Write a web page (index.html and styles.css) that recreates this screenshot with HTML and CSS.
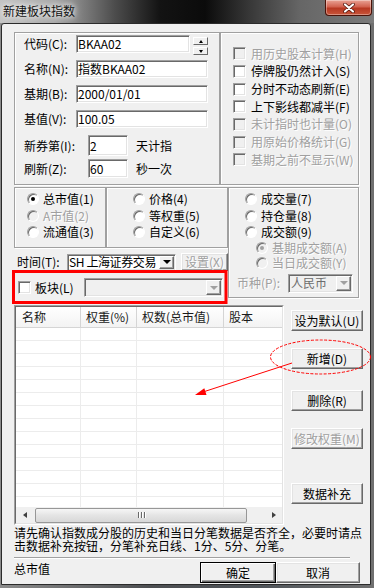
FILE: index.html
```html
<!DOCTYPE html>
<html lang="zh-CN">
<head>
    <meta charset="UTF-8">
    <meta name="viewport" content="width=device-width, initial-scale=1.0">
    <title>新建板块指数</title>
    <link rel="stylesheet" href="styles.css">
</head>
<body>
<div class="window">
    <div class="titlebar">
        <span class="title">新建板块指数</span>
        <span class="close">
            <svg width="14" height="10" viewBox="0 0 14 10">
                <path d="M3 1.5 L11 8.5 M11 1.5 L3 8.5" stroke="#4a1006" stroke-width="3.6" stroke-linecap="round"/>
                <path d="M3 1.5 L11 8.5 M11 1.5 L3 8.5" stroke="#fff" stroke-width="2.2" stroke-linecap="round"/>
            </svg>
        </span>
    </div>

    <div class="client">
        <div class="row-top">
            <div class="group grp-basic">
                <div class="field">
                    <span class="lbl">代码(C):</span>
                    <span class="edit w-code">BKAA02</span>
                    <span class="spin">
                        <span class="spin-btn"><i class="tri-up"></i></span>
                        <span class="spin-btn"><i class="tri-down"></i></span>
                    </span>
                </div>
                <div class="field"><span class="lbl">名称(N):</span><span class="edit w-long">指数BKAA02</span></div>
                <div class="field"><span class="lbl">基期(B):</span><span class="edit w-long">2000/01/01</span></div>
                <div class="field"><span class="lbl">基值(V):</span><span class="edit w-long">100.05</span></div>
                <div class="field tall"><span class="lbl lbl-wide">新券第(I):</span><span class="edit w-short">2</span><span class="unit">天计指</span></div>
                <div class="field f6"><span class="lbl lbl-wide">刷新(Z):</span><span class="edit w-short">60</span><span class="unit">秒一次</span></div>
            </div>
            <div class="group grp-opts">
                <div class="opt dim"><span class="check off"></span>用历史股本计算(H)</div>
                <div class="opt"><span class="check"></span>停牌股仍然计入(S)</div>
                <div class="opt"><span class="check"></span>分时不动态刷新(E)</div>
                <div class="opt"><span class="check"></span>上下影线都减半(F)</div>
                <div class="opt dim"><span class="check off"></span>未计指时也计量(O)</div>
                <div class="opt dim"><span class="check off"></span>用原始价格统计(G)</div>
                <div class="opt dim"><span class="check off"></span>基期之前不显示(W)</div>
            </div>
        </div>

        <div class="mid">
            <div class="mid-left">
                <div class="radio-groups">
                    <div class="group grp-r1">
                        <div class="opt-r"><span class="radio on"></span>总市值(1)</div>
                        <div class="opt-r dim"><span class="radio off"></span>A市值(2)</div>
                        <div class="opt-r"><span class="radio"></span>流通值(3)</div>
                    </div>
                    <div class="group grp-r2">
                        <div class="opt-r"><span class="radio"></span>价格(4)</div>
                        <div class="opt-r"><span class="radio"></span>等权重(5)</div>
                        <div class="opt-r"><span class="radio"></span>自定义(6)</div>
                    </div>
                </div>
                <div class="time-row">
                    <span class="lbl">时间(T):</span>
                    <span class="combo w-time">
                        <span class="combo-text tight">SH 上海证券交易</span>
                        <span class="combo-btn"><i class="tri-down big"></i></span>
                    </span>
                    <span class="btn btn-set dim">设置(X)</span>
                </div>
                <div class="block-row">
                    <span class="check"></span>
                    <span class="lbl">板块(L)</span>
                    <span class="combo off w-block">
                        <span class="combo-text"></span>
                        <span class="combo-btn"><i class="tri-down big grey"></i></span>
                    </span>
                </div>
            </div>
            <div class="group grp-r3">
                <div class="opt-r"><span class="radio"></span>成交量(7)</div>
                <div class="opt-r"><span class="radio"></span>持仓量(8)</div>
                <div class="opt-r"><span class="radio"></span>成交额(9)</div>
                <div class="opt-r opt-sub dim"><span class="radio off on"></span>基期成交额(A)</div>
                <div class="opt-r opt-sub dim"><span class="radio off"></span>当日成交额(Y)</div>
                <div class="cur-row">
                    <span class="lbl dim">币种(P):</span>
                    <span class="combo off w-cur">
                        <span class="combo-text grey-text">人民币</span>
                        <span class="combo-btn"><i class="tri-down big grey"></i></span>
                    </span>
                </div>
            </div>
        </div>

        <div class="list-row">
            <div class="list">
                <div class="list-in">
                    <div class="list-head">
                        <span class="c1">名称</span>
                        <span class="c2">权重(%)</span>
                        <span class="c3">权数(总市值)</span>
                        <span class="c4">股本</span>
                    </div>
                    <div class="list-body"></div>
                    <div class="hscroll">
                        <span class="sb-btn"><i class="tri-left"></i></span>
                        <span class="thumb"><i></i><i></i><i></i></span>
                        <span class="sb-btn sb-right"><i class="tri-right"></i></span>
                    </div>
                </div>
            </div>
            <div class="side">
                <span class="btn">设为默认(U)</span>
                <span class="btn b-add">新增(D)</span>
                <span class="btn b-del">删除(R)</span>
                <span class="btn b-mod dim">修改权重(M)</span>
                <span class="btn b-data">数据补充</span>
            </div>
        </div>

        <p class="note">请先确认指数成分股的历史和当日分笔数据是否齐全，必要时请点<br>击数据补充按钮，分笔补充日线、1分、5分、分笔。</p>
        <div class="sep"></div>

        <div class="footer">
            <span class="lbl">总市值</span>
            <span class="btn btn-ok">确定</span>
            <span class="btn btn-cancel">取消</span>
        </div>
    </div>

    <svg class="marks" width="374" height="588" viewBox="0 0 374 588">
        <rect x="13.5" y="271.5" width="212.5" height="31" fill="none" stroke="#ff0000" stroke-width="3"/>
        <ellipse cx="320.5" cy="357" rx="50" ry="17" fill="none" stroke="#ff0000" stroke-width="1" stroke-dasharray="3 1.5"/>
        <line x1="292" y1="363" x2="203" y2="392" stroke="#ff0000" stroke-width="1"/>
        <polygon points="195,395 204.3,388.3 206.5,394.9" fill="#ff0000"/>
    </svg>
</div>
</body>
</html>
```

FILE: styles.css
```css
* { box-sizing: border-box; }
body { margin: 0; font-family: "Noto Sans CJK SC", "Noto Sans", sans-serif; font-size: 12px; line-height: 14px; color: #000; }

.window {
    position: relative; width: 374px; height: 588px; overflow: hidden;
    display: flex; flex-direction: column; padding: 0 3px 3px 1px;
    background: linear-gradient(90deg, #8c8c8c, #4d4f52 40%, #50555a 70%, #707070);
}
.titlebar {
    flex: none; height: 23px; margin: 0 -3px 0 -1px;
    display: flex; justify-content: space-between; align-items: flex-start;
    background: linear-gradient(90deg, #c4c4c4 0, #a8a8a8 55px, #4c4c4c 115px, #131313 160px, #0b0b0b 205px, #383838 250px, #666 300px, #7b7b7b 374px);
}
.title { padding: 4px 0 0 3px; color: #111; text-shadow: 0 0 5px #fff, 0 0 8px #fff; }
.close {
    width: 47px; height: 16px; margin-right: 2px;
    display: flex; align-items: center; justify-content: center;
    border: 1px solid #4a1208; border-top: 0; border-radius: 0 0 4px 4px;
    background: linear-gradient(#e9a395, #d2624f 45%, #b73822 55%, #c8553a);
    box-shadow: inset 0 0 0 1px rgba(255, 255, 255, .35);
}

.client {
    flex: 1; background: #f0f0f0;
    border: 1px solid #2b2b2b; border-radius: 3px 3px 0 0;
    padding: 8px 0 0 12px;
}

/* common win32 bits */
.group { border: 1px solid #a0a0a0; box-shadow: inset 1px 1px 0 #fff, 1px 1px 0 #fff; }
.dim { color: #a0a0a0; text-shadow: 1px 1px 0 #fff; }
.lbl { white-space: nowrap; flex: none; }
.edit {
    height: 100%; display: flex; align-items: center; padding-left: 1px;
    background: #fff; white-space: nowrap; overflow: hidden;
    border: 1px solid; border-color: #a0a0a0 #fff #fff #a0a0a0;
    box-shadow: inset 1px 1px 0 #696969, inset -1px -1px 0 #e3e3e3;
}
.btn {
    display: flex; align-items: center; justify-content: center; white-space: nowrap;
    background: #f0f0f0;
    border: 1px solid; border-color: #fff #696969 #696969 #fff;
    box-shadow: inset -1px -1px 0 #a0a0a0, inset 1px 1px 0 #e3e3e3;
}
.check {
    flex: none; width: 13px; height: 13px; background: #fff;
    border: 1px solid; border-color: #a0a0a0 #fff #fff #a0a0a0;
    box-shadow: inset 1px 1px 0 #696969, inset -1px -1px 0 #e3e3e3;
}
.check.off { background: #f0f0f0; }
.radio {
    position: relative; flex: none; width: 12px; height: 12px; margin-right: 4px;
    border-radius: 50%; background: #fff;
    border: 1px solid; border-color: #a0a0a0 #fff #fff #a0a0a0;
    box-shadow: inset 1px 1px 0 #696969;
}
.radio.on::after {
    content: ""; position: absolute; left: 3px; top: 3px;
    width: 4px; height: 4px; border-radius: 50%; background: #000;
}
.radio.off { background: #f0f0f0; }
.radio.off.on::after { background: #a0a0a0; }

.tri-up, .tri-down, .tri-left, .tri-right { display: block; width: 0; height: 0; border: solid transparent; }
.tri-up { border-width: 0 2.5px 3px; border-bottom-color: #000; }
.tri-down { border-width: 3px 2.5px 0; border-top-color: #000; }
.tri-down.big { border-width: 4px 4px 0; }
.tri-down.grey { border-top-color: #a0a0a0; }
.tri-left { border-width: 3.5px 4px 3.5px 0; border-right-color: #404040; }
.tri-right { border-width: 3.5px 0 3.5px 4px; border-left-color: #404040; }

/* top row */
.row-top { display: flex; height: 153px; }
.grp-basic { width: 206px; padding: 2px 0 0 9px; }
.grp-opts { width: 139px; padding: 12px 0 0 12px; }

.field { display: flex; align-items: center; height: 18px; margin-top: 7px; }
.field:first-child { margin-top: 0; }
.field.tall { height: 21px; }
.field.f6 { height: 19px; margin-top: 3px; }
.field .lbl { width: 52px; }
.field .lbl-wide { width: 64px; }
.w-code { width: 114px; }
.w-long { width: 132px; }
.w-short { width: 40px; }
.unit { margin-left: 8px; }

.spin { align-self: flex-start; margin: 2px 0 0 3px; display: flex; flex-direction: column; gap: 2px; }
.spin-btn {
    width: 15px; height: 8px; display: flex; align-items: center; justify-content: center;
    background: #f0f0f0;
    border: 1px solid; border-color: #fff #696969 #696969 #fff;
}

.opt { display: flex; align-items: center; height: 17.67px; white-space: nowrap; }
.opt .check { margin-right: 5px; }

/* middle */
.mid { display: flex; margin-top: 2px; }
.mid-left { width: 214px; }
.radio-groups { display: flex; height: 61px; }
.grp-r1 { width: 92px; padding: 3px 0 0 12px; }
.grp-r2 { width: 122px; padding: 3px 0 0 26px; }
.grp-r3 { width: 131px; height: 111px; padding: 3px 0 0 16px; }
.opt-r { display: flex; align-items: center; height: 16.5px; white-space: nowrap; }
.opt-sub { height: 15px; padding-left: 11px; }

.combo {
    display: flex; background: #fff;
    border: 1px solid; border-color: #a0a0a0 #fff #fff #a0a0a0;
    box-shadow: inset 1px 1px 0 #696969, inset -1px -1px 0 #e3e3e3;
    padding: 1px;
}
.combo.off { background: #f0f0f0; }
.combo-text { flex: 1; padding-left: 1px; line-height: 12px; white-space: nowrap; display: flex; align-items: center; }
.combo-text.tight { letter-spacing: -0.4px; padding-left: 0; }
.grey-text { color: #6d6d6d; }
.combo-btn {
    flex: none; width: 15px; display: flex; align-items: center; justify-content: center;
    background: #f0f0f0;
    border: 1px solid; border-color: #fff #696969 #696969 #fff;
    box-shadow: inset -1px -1px 0 #a0a0a0;
}

.time-row { display: flex; align-items: center; height: 18px; margin-top: 5px; padding-left: 3px; }
.time-row .lbl { width: 50px; }
.w-time { width: 109px; height: 17px; }
.btn-set { width: 47px; height: 18px; margin-left: 5px; }

.block-row { display: flex; align-items: center; height: 19px; margin-top: 7px; padding-left: 4px; }
.block-row .check { margin-right: 4px; }
.block-row .lbl { width: 49px; }
.w-block { width: 139px; height: 19px; }

.cur-row { display: flex; align-items: center; height: 19px; margin: 3px 0 0 -8px; }
.cur-row .lbl { width: 51px; }
.w-cur { width: 65px; height: 19px; }

/* list */
.list-row { display: flex; margin-top: 7px; }
.list { width: 270px; height: 220px; border: 1px solid; border-color: #a0a0a0 #fff #fff #a0a0a0; }
.list-in {
    height: 100%; display: flex; flex-direction: column; background: #fff;
    border: 1px solid; border-color: #696969 #e3e3e3 #e3e3e3 #696969;
}
.list-head { display: flex; flex: none; height: 21px; border-bottom: 1px solid #d5d5d5; background: linear-gradient(#fff, #f3f3f3); }
.list-head span { padding: 3px 0 0 5px; border-right: 1px solid #d5d5d5; white-space: nowrap; color: #1a1a1a; }
.list-head .c1 { width: 65px; padding-left: 6px; }
.list-head .c2 { width: 56px; }
.list-head .c3 { width: 87px; }
.list-head .c4 { flex: 1; border-right: 0; }
.list-body {
    flex: 1;
    background:
        linear-gradient(#ececec, #ececec) 64px 0 / 1px 100% no-repeat,
        linear-gradient(#ececec, #ececec) 120px 0 / 1px 100% no-repeat,
        linear-gradient(#ececec, #ececec) 207px 0 / 1px 100% no-repeat,
        repeating-linear-gradient(#fff 0 12px, #ececec 12px 13px);
}
.hscroll { flex: none; height: 16px; display: flex; align-items: center; background: #f0f0f0; }
.sb-btn { width: 17px; height: 16px; display: flex; align-items: center; justify-content: center; }
.sb-right { margin-left: auto; width: 16px; }
.thumb {
    width: 212px; height: 15px; margin-left: 2px;
    display: flex; align-items: center; justify-content: center; gap: 2px;
    border: 1px solid #979797; border-radius: 2px;
    background: linear-gradient(#f6f6f6, #e4e4e4 50%, #d8d8d8);
}
.thumb i { width: 1px; height: 6px; background: #6a6a6a; box-shadow: 1px 0 0 #fff; }

.side { width: 72px; margin-left: 7px; display: flex; flex-direction: column; }
.side .btn { height: 21px; margin-top: 17px; }
.side .btn:first-child { margin-top: 5px; }
.side .b-del { margin-top: 21px; }
.side .b-data { margin-top: 34px; }

/* bottom */
.note { margin: 1px 0 0; line-height: 13px; white-space: nowrap; }
.sep { width: 336px; height: 2px; margin-top: 5px; border-top: 1px solid #a0a0a0; border-bottom: 1px solid #fff; }
.footer { display: flex; margin-top: 3px; }
.footer .lbl { width: 186px; }
.btn-ok {
    width: 76px; height: 21px; border: 1px solid #000;
    box-shadow: inset 1px 1px 0 #fff, inset -1px -1px 0 #696969, inset -2px -2px 0 #a0a0a0;
}
.btn-cancel { width: 84px; height: 21px; }

.marks { position: absolute; left: 0; top: 0; pointer-events: none; }
```
